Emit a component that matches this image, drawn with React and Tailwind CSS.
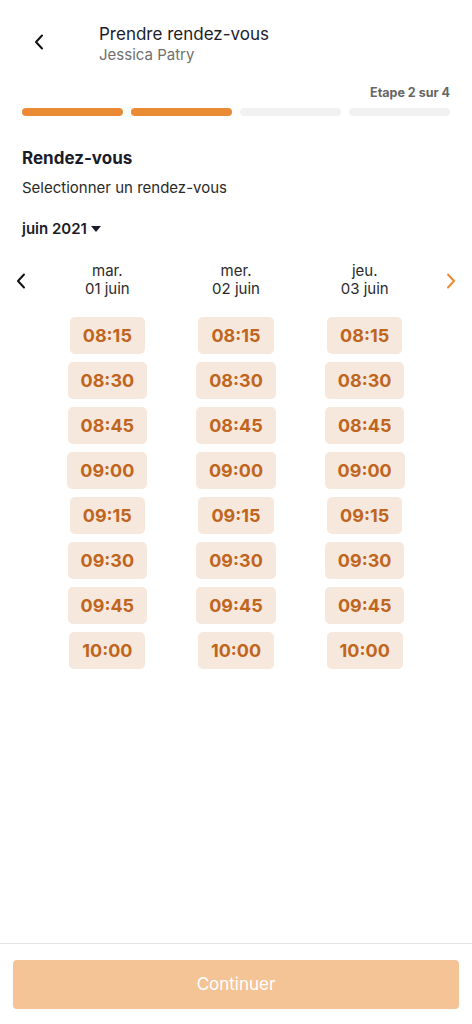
import React from "react";

const Chevron = ({ dir = "left", color = "#111111", className = "" }) => (
  <svg width="10" height="16" viewBox="0 0 10 16" className={className} fill="none">
    {dir === "left" ? (
      <path d="M8 1.5 L2 8 L8 14.5" stroke={color} strokeWidth="2" strokeLinecap="round" strokeLinejoin="round" />
    ) : (
      <path d="M2 1.5 L8 8 L2 14.5" stroke={color} strokeWidth="2" strokeLinecap="round" strokeLinejoin="round" />
    )}
  </svg>
);

const days = [
  { d: "mar.", date: "01 juin" },
  { d: "mer.", date: "02 juin" },
  { d: "jeu.", date: "03 juin" },
];
const times = ["08:15", "08:30", "08:45", "09:00", "09:15", "09:30", "09:45", "10:00"];

export default function App() {
  return (
    <div
      className="w-[472px] h-[1024px] bg-white flex flex-col text-[#1c1c28]"
      style={{ fontFamily: "Inter, 'Noto Sans', sans-serif" }}
    >
      <div className="flex items-start h-[84px] pt-[23px]">
        <div className="w-[99px] flex pl-[34px] pt-[11px]">
          <Chevron />
        </div>
        <div className="flex flex-col">
          <span className="text-[17px] leading-[22px] text-[#1c1c28]">Prendre rendez-vous</span>
          <span className="text-[15px] leading-[20px] text-[#707070]">Jessica Patry</span>
        </div>
      </div>

      <div className="px-[22px]">
        <div className="text-right text-[12.5px] font-bold text-[#666] leading-[18px]">Etape 2 sur 4</div>
        <div className="flex gap-[8px] mt-[6px]">
          <div className="flex-1 h-[8px] rounded-full bg-[#eb8a34]" />
          <div className="flex-1 h-[8px] rounded-full bg-[#eb8a34]" />
          <div className="flex-1 h-[8px] rounded-full bg-[#f1f1f1]" />
          <div className="flex-1 h-[8px] rounded-full bg-[#f1f1f1]" />
        </div>
        <div className="mt-[30px] text-[17px] font-bold leading-[24px]">Rendez-vous</div>
        <div className="mt-[8px] text-[15px] leading-[20px] text-[#2a2a2a]">Selectionner un rendez-vous</div>
        <div className="mt-[21px] flex items-center gap-[4px] text-[15px] font-semibold leading-[20px]">
          juin 2021
          <svg width="10" height="6" viewBox="0 0 10 6"><path d="M0 0 H10 L5 6 Z" fill="#1c1c28" /></svg>
        </div>
      </div>

      <div className="flex mt-[23px]">
        <div className="w-[43px] flex justify-start pl-[16px] pt-[11px]">
          <Chevron />
        </div>
        {days.map((day) => (
          <div key={day.date} className="flex-1 flex flex-col items-center">
            <span className="text-[15px] leading-[18px] text-[#2a2a2a]">{day.d}</span>
            <span className="text-[15px] leading-[18px] text-[#2a2a2a]">{day.date}</span>
            <div className="flex flex-col items-center gap-[8px] mt-[19px]">
              {times.map((t) => (
                <div
                  key={t}
                  className="h-[37px] px-[13px] flex items-center justify-center rounded-[5px] bg-[#f6e8dc] text-[#c0651e] text-[18px] font-bold"
                >
                  {t}
                </div>
              ))}
            </div>
          </div>
        ))}
        <div className="w-[43px] flex justify-end pr-[16px] pt-[11px]">
          <Chevron dir="right" color="#ee8a33" />
        </div>
      </div>

      <div className="flex-1" />
      <div className="border-t border-[#e3e3e3] h-[81px] px-[13px] pt-[16px]">
        <div className="h-[49px] rounded-[4px] bg-[#f4c497] flex items-center justify-center text-white text-[17px]">
          Continuer
        </div>
      </div>
    </div>
  );
}
